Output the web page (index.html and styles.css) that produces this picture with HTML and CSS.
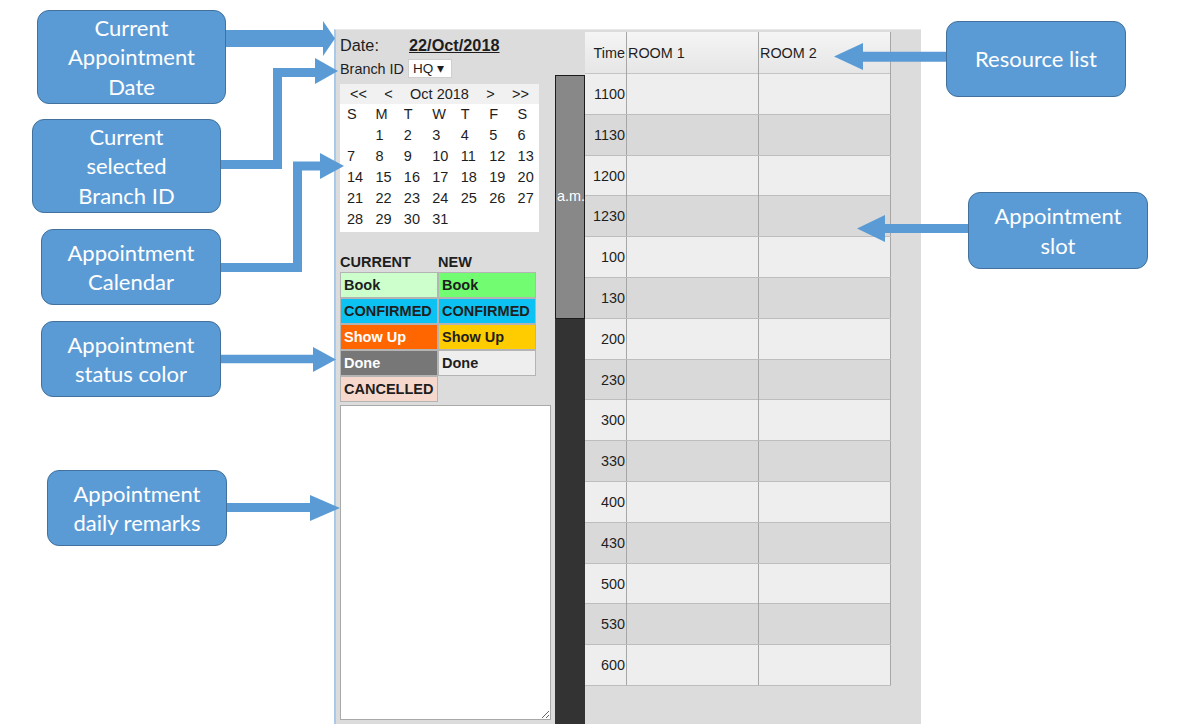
FILE: index.html
```html
<!DOCTYPE html>
<html lang="en">
<head>
    <meta charset="UTF-8">
    <meta name="viewport" content="width=device-width, initial-scale=1.0">
    <title>Appointment Book</title>
    <link rel="stylesheet" href="styles.css">
</head>
<body>
    <div class="app">
        <div class="side">
            <div class="date-row">
                <span class="date-label">Date:</span>
                <span class="date-value">22/Oct/2018</span>
            </div>
            <div class="branch-row">
                <span>Branch ID</span>
                <span class="branch-select">HQ &#9662;</span>
            </div>

            <div class="calendar">
                <div class="cal-nav">
                    <span>&lt;&lt;</span>
                    <span>&lt;</span>
                    <span>Oct 2018</span>
                    <span>&gt;</span>
                    <span>&gt;&gt;</span>
                </div>
                <div class="cal-days">
                    <span>S</span><span>M</span><span>T</span><span>W</span><span>T</span><span>F</span><span>S</span>
                    <span></span><span>1</span><span>2</span><span>3</span><span>4</span><span>5</span><span>6</span>
                    <span>7</span><span>8</span><span>9</span><span>10</span><span>11</span><span>12</span><span>13</span>
                    <span>14</span><span>15</span><span>16</span><span>17</span><span>18</span><span>19</span><span>20</span>
                    <span>21</span><span>22</span><span>23</span><span>24</span><span>25</span><span>26</span><span>27</span>
                    <span>28</span><span>29</span><span>30</span><span>31</span>
                </div>
            </div>

            <div class="status-labels">
                <span>CURRENT</span>
                <span>NEW</span>
            </div>
            <div class="status-grid">
                <div class="st cur-book">Book</div>
                <div class="st new-book">Book</div>
                <div class="st confirmed">CONFIRMED</div>
                <div class="st confirmed">CONFIRMED</div>
                <div class="st cur-show">Show Up</div>
                <div class="st new-show">Show Up</div>
                <div class="st cur-done">Done</div>
                <div class="st new-done">Done</div>
                <div class="st cancelled">CANCELLED</div>
            </div>

            <textarea class="remarks"></textarea>
        </div>

        <div class="strip">
            <div class="strip-am">a.m.</div>
            <div class="strip-rest"></div>
        </div>

        <div class="sched">
            <div class="sched-head">
                <div class="time">Time</div>
                <div class="room">ROOM 1</div>
                <div class="room">ROOM 2</div>
            </div>
            <div class="slot"><div class="time">1100</div><div class="room"></div><div class="room"></div></div>
            <div class="slot"><div class="time">1130</div><div class="room"></div><div class="room"></div></div>
            <div class="slot"><div class="time">1200</div><div class="room"></div><div class="room"></div></div>
            <div class="slot"><div class="time">1230</div><div class="room"></div><div class="room"></div></div>
            <div class="slot"><div class="time">100</div><div class="room"></div><div class="room"></div></div>
            <div class="slot"><div class="time">130</div><div class="room"></div><div class="room"></div></div>
            <div class="slot"><div class="time">200</div><div class="room"></div><div class="room"></div></div>
            <div class="slot"><div class="time">230</div><div class="room"></div><div class="room"></div></div>
            <div class="slot"><div class="time">300</div><div class="room"></div><div class="room"></div></div>
            <div class="slot"><div class="time">330</div><div class="room"></div><div class="room"></div></div>
            <div class="slot"><div class="time">400</div><div class="room"></div><div class="room"></div></div>
            <div class="slot"><div class="time">430</div><div class="room"></div><div class="room"></div></div>
            <div class="slot"><div class="time">500</div><div class="room"></div><div class="room"></div></div>
            <div class="slot"><div class="time">530</div><div class="room"></div><div class="room"></div></div>
            <div class="slot"><div class="time">600</div><div class="room"></div><div class="room"></div></div>
        </div>
    </div>

    <!-- annotation arrows -->
    <svg class="arrows" width="1196" height="724" viewBox="0 0 1196 724">
        <g fill="#5b9bd5">
            <rect x="224" y="30" width="100" height="17"/>
            <polygon points="323,21 335,38.5 323,56"/>
            <polygon points="315,58 338,71 315,84"/>
            <polygon points="320,153 344,166 320,179"/>
            <polygon points="313,347 336,359.5 313,372"/>
            <polygon points="310,495 340,508 310,521"/>
            <polygon points="863,43 834,56.5 863,70"/>
            <polygon points="885,215 857,228.5 885,242"/>
        </g>
        <g fill="none" stroke="#5b9bd5" stroke-linejoin="miter">
            <polyline points="219,164.5 277.5,164.5 277.5,72.5 316,72.5" stroke-width="9"/>
            <polyline points="219,267.5 297.5,267.5 297.5,166 321,166" stroke-width="9"/>
            <polyline points="219,359 314,359" stroke-width="8.5"/>
            <polyline points="225,507.5 311,507.5" stroke-width="9"/>
            <polyline points="947,56.7 862,56.7" stroke-width="10"/>
            <polyline points="969,228.5 884,228.5" stroke-width="9"/>
        </g>
    </svg>

    <div class="callout c-date">Current<br>Appointment<br>Date</div>
    <div class="callout c-branch">Current<br>selected<br>Branch ID</div>
    <div class="callout c-cal">Appointment<br>Calendar</div>
    <div class="callout c-status">Appointment<br>status color</div>
    <div class="callout c-remarks">Appointment<br>daily remarks</div>
    <div class="callout c-resource">Resource list</div>
    <div class="callout c-slot">Appointment<br>slot</div>
</body>
</html>
```

FILE: styles.css
```css
/* Page */
body {
    margin: 0;
    padding: 0;
    background-color: #fff;
    font-family: "Liberation Sans", Arial, sans-serif;
    color: #1e1e1e;
    position: relative;
    width: 1196px;
    height: 724px;
    overflow: hidden;
}

/* Main panel */
.app {
    display: flex;
    margin: 29px 0 0 334px;
    width: 585px;
    height: 695px;
    background-color: #dcdcdc;
    border-left: 2px solid #a9c9e9;
    border-top: 1px solid #e9e9e9;
}

/* Left column */
.side {
    width: 213px;
    padding: 5px 0 0 4px;
}

.date-row {
    display: flex;
    height: 20px;
    line-height: 20px;
    font-size: 16.3px;
}

.date-label {
    width: 69px;
}

.date-value {
    font-weight: bold;
    text-decoration: underline;
}

.branch-row {
    display: flex;
    align-items: center;
    margin-top: 3px;
    height: 21px;
    font-size: 14.4px;
}

.branch-select {
    margin-left: 4px;
    width: 38px;
    height: 17px;
    line-height: 17px;
    padding-left: 4px;
    box-sizing: content-box;
    background-color: #fff;
    border: 1px solid #cfcfcf;
    font-size: 13.5px;
}

/* Calendar */
.calendar {
    margin-top: 5px;
    width: 199px;
    background-color: #fff;
    padding-bottom: 2px;
    font-size: 14.5px;
}

.cal-nav {
    display: grid;
    grid-template-columns: 37px 23px 79px 23px 37px;
    height: 20px;
    line-height: 20px;
    text-align: center;
    background-color: #f1f1f1;
}

.cal-days {
    display: grid;
    grid-template-columns: repeat(7, 1fr);
    grid-auto-rows: 21px;
    line-height: 21px;
}

.cal-days span {
    padding-left: 7px;
}

/* Status colours */
.status-labels {
    display: grid;
    grid-template-columns: 98px 98px;
    margin-top: 21px;
    height: 18px;
    line-height: 18px;
    font-size: 14.5px;
    font-weight: bold;
}

.status-grid {
    display: grid;
    grid-template-columns: 98px 98px;
    grid-auto-rows: 26px;
    margin-top: 1px;
}

.st {
    border: 1px solid #b4b4b4;
    padding-left: 3px;
    line-height: 24px;
    font-size: 14.5px;
    font-weight: bold;
    color: #1e1e1e;
    white-space: nowrap;
}

.cur-book { background-color: #ccffcc; }
.new-book { background-color: #72fc72; }
.confirmed { background-color: #0cc2f2; }
.cur-show { background-color: #ff6600; color: #fff; }
.new-show { background-color: #ffcc00; }
.cur-done { background-color: #777; color: #fff; }
.new-done { background-color: #eee; }
.cancelled { background-color: #f6d9cc; }

.remarks {
    display: block;
    margin-top: 3px;
    width: 211px;
    height: 315px;
    box-sizing: border-box;
    border: 1px solid #a9a9a9;
    background-color: #fff;
}

/* Dark strip between sidebar and schedule */
.strip {
    display: flex;
    flex-direction: column;
    width: 30px;
    margin: 45px 0 0 2px;
    background-color: #333;
}

.strip-am {
    height: 244px;
    box-sizing: border-box;
    background-color: #888;
    border: 1px solid #1c1c1c;
    color: #fff;
    font-size: 14.4px;
    line-height: 240px;
    padding-left: 1px;
    white-space: nowrap;
}

/* Schedule grid */
.sched {
    margin-top: 2px;
    width: 306px;
}

.sched-head,
.slot {
    display: grid;
    grid-template-columns: 42px 132px 132px;
    font-size: 14.4px;
}

.sched-head {
    height: 42px;
    line-height: 42px;
    background: linear-gradient(#f5f5f5, #ededed 50%, #e6e6e6);
    border-bottom: 1px solid #c4c4c4;
    box-sizing: border-box;
}

.slot {
    height: 40.8px;
    line-height: 40px;
    box-sizing: border-box;
    border-bottom: 1px solid #bdbdbd;
    background-color: #eeeeee;
}

.slot:nth-child(odd) {
    background-color: #d9d9d9;
}

.time {
    text-align: right;
    padding-right: 1px;
    border-right: 1px solid #a6a6a6;
    white-space: nowrap;
}

.room {
    padding-left: 1px;
    border-right: 1px solid #a6a6a6;
}

/* Annotations */
.arrows {
    position: absolute;
    left: 0;
    top: 0;
    pointer-events: none;
}

.callout {
    position: absolute;
    display: flex;
    align-items: center;
    justify-content: center;
    text-align: center;
    box-sizing: border-box;
    background-color: #5b9bd5;
    border: 1px solid #41719c;
    border-radius: 12px;
    color: #fff;
    font-family: Lato, "Open Sans", sans-serif;
    font-size: 22px;
    line-height: 29.5px;
}

.c-date { left: 37px; top: 10px; width: 189px; height: 94px; }
.c-branch { left: 32px; top: 119px; width: 189px; height: 94px; }
.c-cal { left: 41px; top: 229px; width: 180px; height: 76px; }
.c-status { left: 41px; top: 321px; width: 180px; height: 76px; }
.c-remarks { left: 47px; top: 470px; width: 180px; height: 76px; }
.c-resource { left: 946px; top: 21px; width: 180px; height: 76px; }
.c-slot { left: 968px; top: 192px; width: 180px; height: 77px; }
```
